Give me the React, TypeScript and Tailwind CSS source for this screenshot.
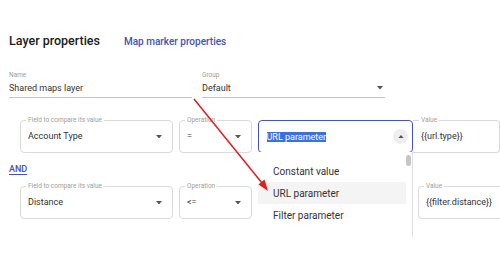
import React from 'react';

const font = { fontFamily: 'Roboto, "Liberation Sans", sans-serif' };

const Caret = ({ up = false }: { up?: boolean }) => (
  <svg width="6" height="3.5" viewBox="0 0 7 4" className="shrink-0">
    <path d={up ? 'M0 4 L3.5 0 L7 4 Z' : 'M0 0 L3.5 4 L7 0 Z'} fill="#555" />
  </svg>
);

interface FieldProps {
  label: string;
  value: string;
  width: string;
}

const Outlined: React.FC<FieldProps> = ({ label, value, width }) => (
  <div className={`relative h-[33px] rounded-[4px] border border-[#dadada] flex items-center pl-[7px] pr-[10px] ${width}`}>
    <span className="absolute -top-[6px] left-[5px] bg-white px-[2px] text-[6.5px] leading-[10px] text-[#9e9e9e]">{label}</span>
    <span className="flex-1 text-[9px] leading-[11px] text-[#333] truncate">{value}</span>
    <Caret />
  </div>
);

export default function App() {
  return (
    <div className="relative w-[500px] h-[270px] overflow-hidden bg-white" style={font}>
      {/* Header */}
      <div className="flex items-baseline pl-[9px] pt-[33px]">
        <h1 className="text-[12.5px] leading-[15px] font-medium text-[#212121]">Layer properties</h1>
        <a className="ml-[24px] text-[10px] leading-[15px] font-medium text-[#4352b2]">Map marker properties</a>
      </div>

      {/* Name / Group */}
      <div className="flex gap-[10px] pl-[9px] mt-[21px]">
        <div className="w-[183px] border-b border-[#c4c4c4] pb-[3px]">
          <div className="text-[6.5px] leading-[10px] text-[#9e9e9e]">Name</div>
          <div className="text-[9px] leading-[12px] text-[#333] mt-[2px]">Shared maps layer</div>
        </div>
        <div className="w-[183px] border-b border-[#c4c4c4] pb-[3px]">
          <div className="text-[6.5px] leading-[10px] text-[#9e9e9e]">Group</div>
          <div className="flex items-center text-[9px] leading-[12px] text-[#333] mt-[2px]">
            <span className="flex-1">Default</span>
            <span className="mr-[2px]"><Caret /></span>
          </div>
        </div>
      </div>

      {/* Row 1 */}
      <div className="flex pl-[20px] mt-[22px]">
        <Outlined label="Field to compare its value" value="Account Type" width="w-[153px]" />
        <div className="w-[6px]" />
        <Outlined label="Operation" value="=" width="w-[73px]" />
        <div className="w-[6px]" />
        <div className="relative h-[33px] w-[155px] rounded-[4px] border-[1.5px] border-[#4655ad] flex items-center pl-[7.5px] pr-[4px]">
          <span className="flex-1 text-[9px] leading-[10px] text-[#333]">
            <span className="bg-[#3b72d9] text-white">URL parameter</span>
          </span>
          <span className="w-[15px] h-[15px] rounded-full bg-[#eeeeee] flex items-center justify-center">
            <Caret up />
          </span>
        </div>
        <div className="relative h-[33px] flex-1 rounded-r-[4px] border border-l-0 border-[#dadada] flex items-center pl-[8px]">
          <span className="absolute -top-[6px] left-[6px] bg-white px-[2px] text-[6.5px] leading-[10px] text-[#9e9e9e]">Value</span>
          <span className="text-[9px] leading-[11px] text-[#333]">{'{{url.type}}'}</span>
        </div>
      </div>

      {/* AND */}
      <div className="pl-[9px] mt-[11px] text-[9px] leading-[10px] font-medium text-[#4352b2] underline underline-offset-2">AND</div>

      {/* Row 2 */}
      <div className="flex pl-[20px] mt-[12px]">
        <Outlined label="Field to compare its value" value="Distance" width="w-[153px]" />
        <div className="w-[6px]" />
        <Outlined label="Operation" value="<=" width="w-[73px]" />
        <div className="w-[6px]" />
        <div className="h-[33px] w-[154px] rounded-[4px] border border-[#dadada]" />
        <div className="w-[6px]" />
        <div className="relative h-[33px] flex-1 rounded-l-[4px] border border-r-0 border-[#dadada] flex items-center pl-[7px]">
          <span className="absolute -top-[6px] left-[5px] bg-white px-[2px] text-[6.5px] leading-[10px] text-[#9e9e9e]">Value</span>
          <span className="text-[9px] leading-[11px] text-[#333]">{'{{filter.distance}}'}</span>
        </div>
      </div>

      {/* Dropdown menu */}
      <div className="absolute left-[258px] top-[152px] w-[155px] h-[85px] bg-white border-r border-[#dedede] pt-[8px]">
        <div className="absolute right-[1px] top-[3px] w-[5px] h-[11px] rounded-full bg-[#c6c6c6]" />
        <div className="h-[22px] flex items-center pl-[15px] mr-[6px] text-[10px] text-[#333]">Constant value</div>
        <div className="h-[22px] flex items-center pl-[15px] mr-[6px] text-[10px] text-[#333] bg-[#f4f4f4]">URL parameter</div>
        <div className="h-[22px] flex items-center pl-[15px] mr-[6px] text-[10px] text-[#333]">Filter parameter</div>
      </div>

      {/* Red annotation arrow */}
      <svg className="absolute left-0 top-0 pointer-events-none" width="500" height="270">
        <line x1="194" y1="99" x2="262" y2="183" stroke="#e01e1e" strokeWidth="1.5" />
        <path d="M268 191 L258.5 184.5 L264.5 179.5 Z" fill="#e01e1e" />
      </svg>
    </div>
  );
}
